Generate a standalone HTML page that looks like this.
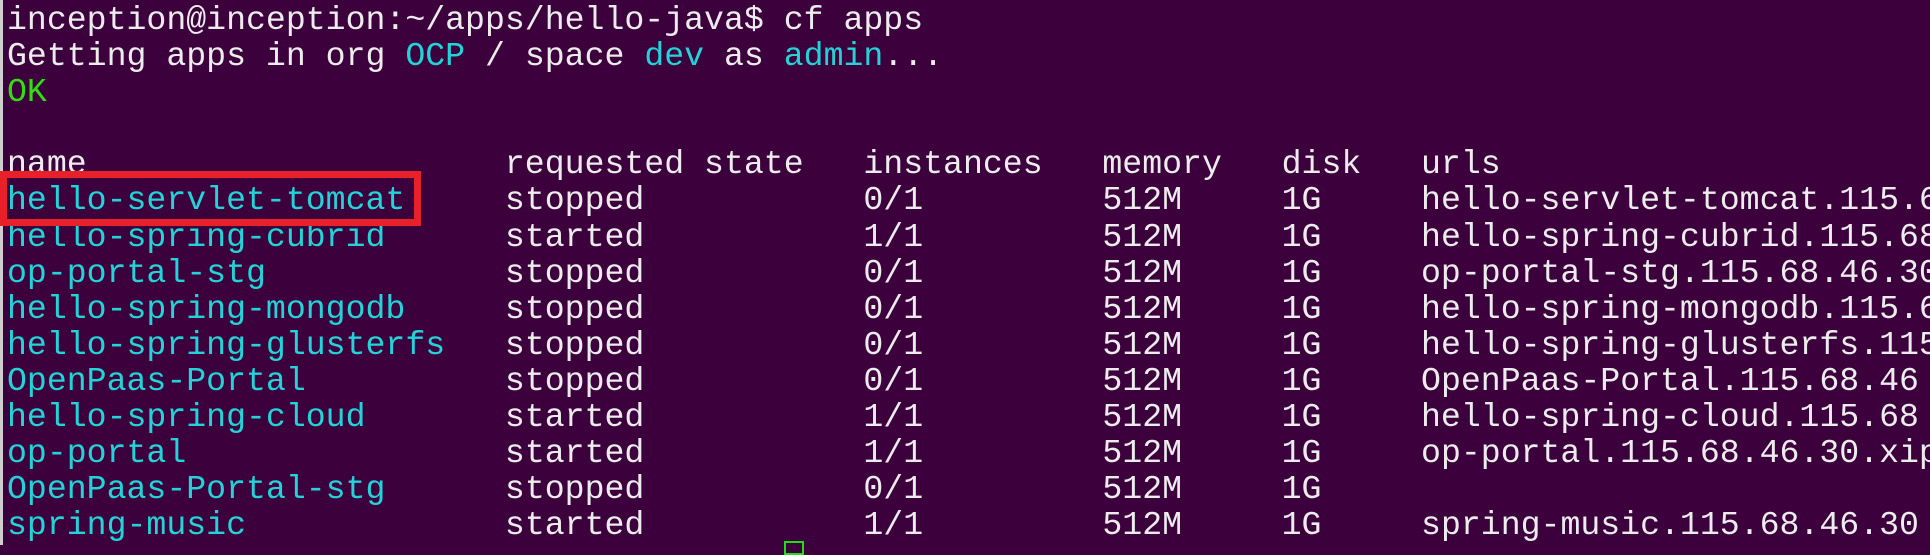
<!DOCTYPE html>
<html><head><meta charset="utf-8"><style>
html,body{margin:0;padding:0;}
body{width:1930px;height:545px;background:#3c003c;overflow:hidden;position:relative;
font-family:"Liberation Mono",monospace;font-size:33.2px;color:#ececec;}
pre{margin:0;position:absolute;left:7px;top:2px;width:1923px;overflow:hidden;font:inherit;line-height:36.1px;white-space:pre;}
.c{color:#22d3d8}.g{color:#33dd11}
.box{position:absolute;left:0;top:171px;width:407px;height:41px;border:7px solid #e8202a;}
.edge{position:absolute;left:0;top:0;width:3px;height:545px;background:#cfcfcf;}
.cur{position:absolute;left:784px;top:541px;width:16px;height:10px;border:2px solid #22dd11;}
</style></head><body>
<div class="edge"></div>
<pre>inception@inception:~/apps/hello-java$ cf apps
Getting apps in org <span class="c">OCP</span> / space <span class="c">dev</span> as <span class="c">admin</span>...
<span class="g">OK</span>

name                     requested state   instances   memory   disk   urls
<span class="c">hello-servlet-tomcat</span>     stopped           0/1         512M     1G     hello-servlet-tomcat.115.6
<span class="c">hello-spring-cubrid</span>      started           1/1         512M     1G     hello-spring-cubrid.115.68
<span class="c">op-portal-stg</span>            stopped           0/1         512M     1G     op-portal-stg.115.68.46.30
<span class="c">hello-spring-mongodb</span>     stopped           0/1         512M     1G     hello-spring-mongodb.115.6
<span class="c">hello-spring-glusterfs</span>   stopped           0/1         512M     1G     hello-spring-glusterfs.115
<span class="c">OpenPaas-Portal</span>          stopped           0/1         512M     1G     OpenPaas-Portal.115.68.46
<span class="c">hello-spring-cloud</span>       started           1/1         512M     1G     hello-spring-cloud.115.68
<span class="c">op-portal</span>                started           1/1         512M     1G     op-portal.115.68.46.30.xip
<span class="c">OpenPaas-Portal-stg</span>      stopped           0/1         512M     1G
<span class="c">spring-music</span>             started           1/1         512M     1G     spring-music.115.68.46.30
</pre>
<div class="box"></div>
<div class="cur"></div>
</body></html>
